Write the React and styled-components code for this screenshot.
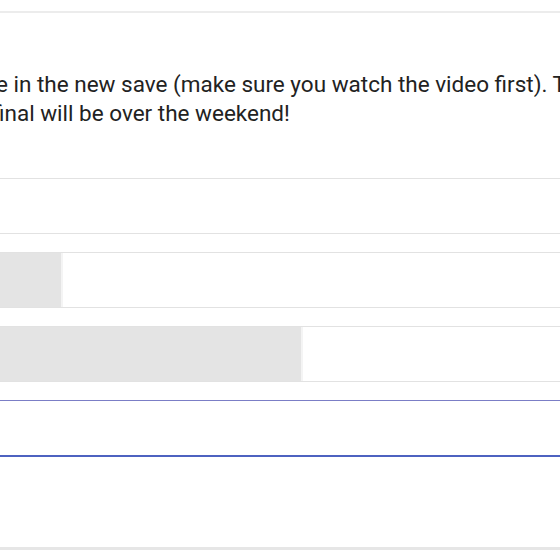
import React from "react";
import styled, { createGlobalStyle } from "styled-components";

const GlobalStyle = createGlobalStyle`
  html, body { margin: 0; padding: 0; background: #ffffff; }
  body { font-family: Roboto, "Noto Sans", Arial, sans-serif; overflow: hidden; }
`;

const Page = styled.div`
  width: 560px;
  height: 560px;
  overflow: hidden;
  display: flex;
  flex-direction: column;
`;

const TopRule = styled.div`
  height: 2px;
  background: #ececec;
  margin-top: 11px;
`;

const Message = styled.p`
  margin: 57px 0 0 -8px;
  font-size: 22.5px;
  line-height: 29px;
  color: #222222;
  white-space: nowrap;
`;

const Lead = styled.span`
  padding-left: 4px;
`;

const Fields = styled.div`
  margin: 50px 0 0 -10px;
  width: 590px;
  display: flex;
  flex-direction: column;
  gap: 18px;
`;

const Field = styled.div`
  position: relative;
  height: 54px;
  border-top: 1px solid ${(p) => (p.$focused ? "#7b7ec6" : "#e2e2e2")};
  border-bottom: ${(p) => (p.$focused ? "2px solid #4d62c0" : "1px solid #e2e2e2")};
  background: #ffffff;
  display: flex;
`;

const Fill = styled.div`
  width: ${(p) => p.$w}px;
  height: 100%;
  background: #e4e4e4;
  border-right: 2px solid #f4f4f4;
`;

const BottomBar = styled.div`
  margin-top: auto;
  margin-bottom: 10px;
  height: 3px;
  background: #e6e6e6;
`;

export default function App() {
  return (
    <>
      <GlobalStyle />
      <Page>
        <TopRule />
        <Message>
          <Lead>e in the new save (make sure you watch the video first). The</Lead>
          <br />
          final will be over the weekend!
        </Message>
        <Fields>
          <Field />
          <Field>
            <Fill $w={71} />
          </Field>
          <Field>
            <Fill $w={311} />
          </Field>
          <Field $focused />
        </Fields>
        <BottomBar />
      </Page>
    </>
  );
}
